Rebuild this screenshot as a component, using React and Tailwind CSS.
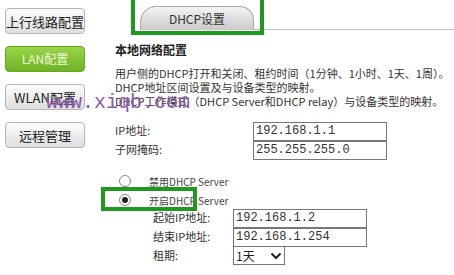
import React from "react";

const font = { fontFamily: '"Noto Sans CJK SC", "DejaVu Sans", sans-serif' };

const SideButton = ({ label, active }) => (
  <button
    className={
      active
        ? "w-[80px] h-[26px] rounded-[4px] border border-[#6aa51c] bg-gradient-to-b from-[#9ad548] to-[#6db324] text-[12px] text-[#eef7d8] leading-none whitespace-nowrap"
        : "w-[80px] h-[26px] rounded-[4px] border border-[#b5b5b5] bg-gradient-to-b from-[#fdfdfd] to-[#dedede] text-[13px] text-[#222] leading-none whitespace-nowrap"
    }
  >
    {label}
  </button>
);

const Field = ({ label, value, labelW }) => (
  <div className="flex items-center h-[19px]">
    <span className={`${labelW} text-[11px] text-[#333] whitespace-nowrap`}>{label}</span>
    <div className="w-[134px] h-[19px] -mb-px border border-[#777] bg-white px-[2px] text-[12px] leading-[17px] text-[#333] font-['Liberation_Mono',monospace] whitespace-nowrap">
      {value}
    </div>
  </div>
);

export default function App() {
  return (
    <div className="relative w-[454px] h-[275px] bg-white overflow-hidden flex" style={font}>
      <div className="w-[100px] pt-[8px] pl-[5px] flex flex-col gap-[12px]">
        <SideButton label="上行线路配置" />
        <SideButton label="LAN配置" active />
        <SideButton label="WLAN配置" />
        <SideButton label="远程管理" />
      </div>

      <div className="flex-1 flex flex-col">
        <div className="h-[30px] flex items-end">
          <div className="w-[40px]" />
          <div className="w-[114px] h-[24px] rounded-tl-[16px] rounded-tr-[14px] border border-b-0 border-[#aaa] bg-gradient-to-b from-[#f4f4f4] to-[#c9c9c9] text-[12px] text-[#333] flex items-center justify-center">
            DHCP设置
          </div>
          <div className="flex-1 border-b border-[#bbb]" />
        </div>

        <div className="pl-[15px] pt-[13px] text-[11px] text-[#222]">
          <div className="font-bold leading-[14px] text-[12px]">本地网络配置</div>
          <div className="mt-[9px] leading-[14px] text-[11px] text-[#333] whitespace-nowrap">
            <div>用户侧的DHCP打开和关闭、租约时间（1分钟、1小时、1天、1周）。</div>
            <div>DHCP地址区间设置及与设备类型的映射。</div>
            <div>DHCP工作模式（DHCP Server和DHCP relay）与设备类型的映射。</div>
          </div>

          <div className="mt-[13px] flex flex-col">
            <Field label="IP地址:" value="192.168.1.1" labelW="w-[138px]" />
            <Field label="子网掩码:" value="255.255.255.0" labelW="w-[138px]" />
          </div>

          <div className="mt-[15px] flex flex-col gap-[5px]">
            <div className="flex items-center h-[14px]">
              <span className="ml-[4px] w-[12px] h-[12px] rounded-full border border-[#888] bg-white" />
              <span className="ml-[18px] text-[10px] text-[#444] whitespace-nowrap">禁用DHCP Server</span>
            </div>
            <div className="flex items-center h-[14px]">
              <span className="ml-[4px] w-[12px] h-[12px] rounded-full border border-[#888] bg-white flex items-center justify-center">
                <span className="w-[6px] h-[6px] rounded-full bg-[#222]" />
              </span>
              <span className="ml-[18px] text-[10px] text-[#444] whitespace-nowrap">开启DHCP Server</span>
            </div>
          </div>

          <div className="mt-[1px] pl-[38px] flex flex-col">
            <Field label="起始IP地址:" value="192.168.1.2" labelW="w-[80px]" />
            <Field label="结束IP地址:" value="192.168.1.254" labelW="w-[80px]" />
            <div className="flex items-center h-[19px]">
              <span className="w-[80px] text-[11px] text-[#333]">租期:</span>
              <div className="w-[52px] h-[19px] border border-[#777] bg-white flex items-center justify-between px-[2px] text-[12px] leading-none">
                <span>1天</span>
                <svg width="12" height="8" viewBox="0 0 12 8">
                  <path d="M1.5 1.5 L6 6 L10.5 1.5" fill="none" stroke="#222" strokeWidth="2" />
                </svg>
              </div>
            </div>
          </div>
        </div>
      </div>

      <div className="absolute left-[131px] top-[-4px] w-[133px] h-[39px] border-[4px] border-[#1e9b1e]" />
      <div className="absolute left-[101px] top-[187px] w-[96px] h-[24px] border-[4px] border-[#1e9b1e]" />
      <div className="absolute left-[46px] top-[93px] text-[20px] leading-none text-[#8a5aa6] font-['Liberation_Mono',monospace]">
        www.xiqb.com
      </div>
    </div>
  );
}
